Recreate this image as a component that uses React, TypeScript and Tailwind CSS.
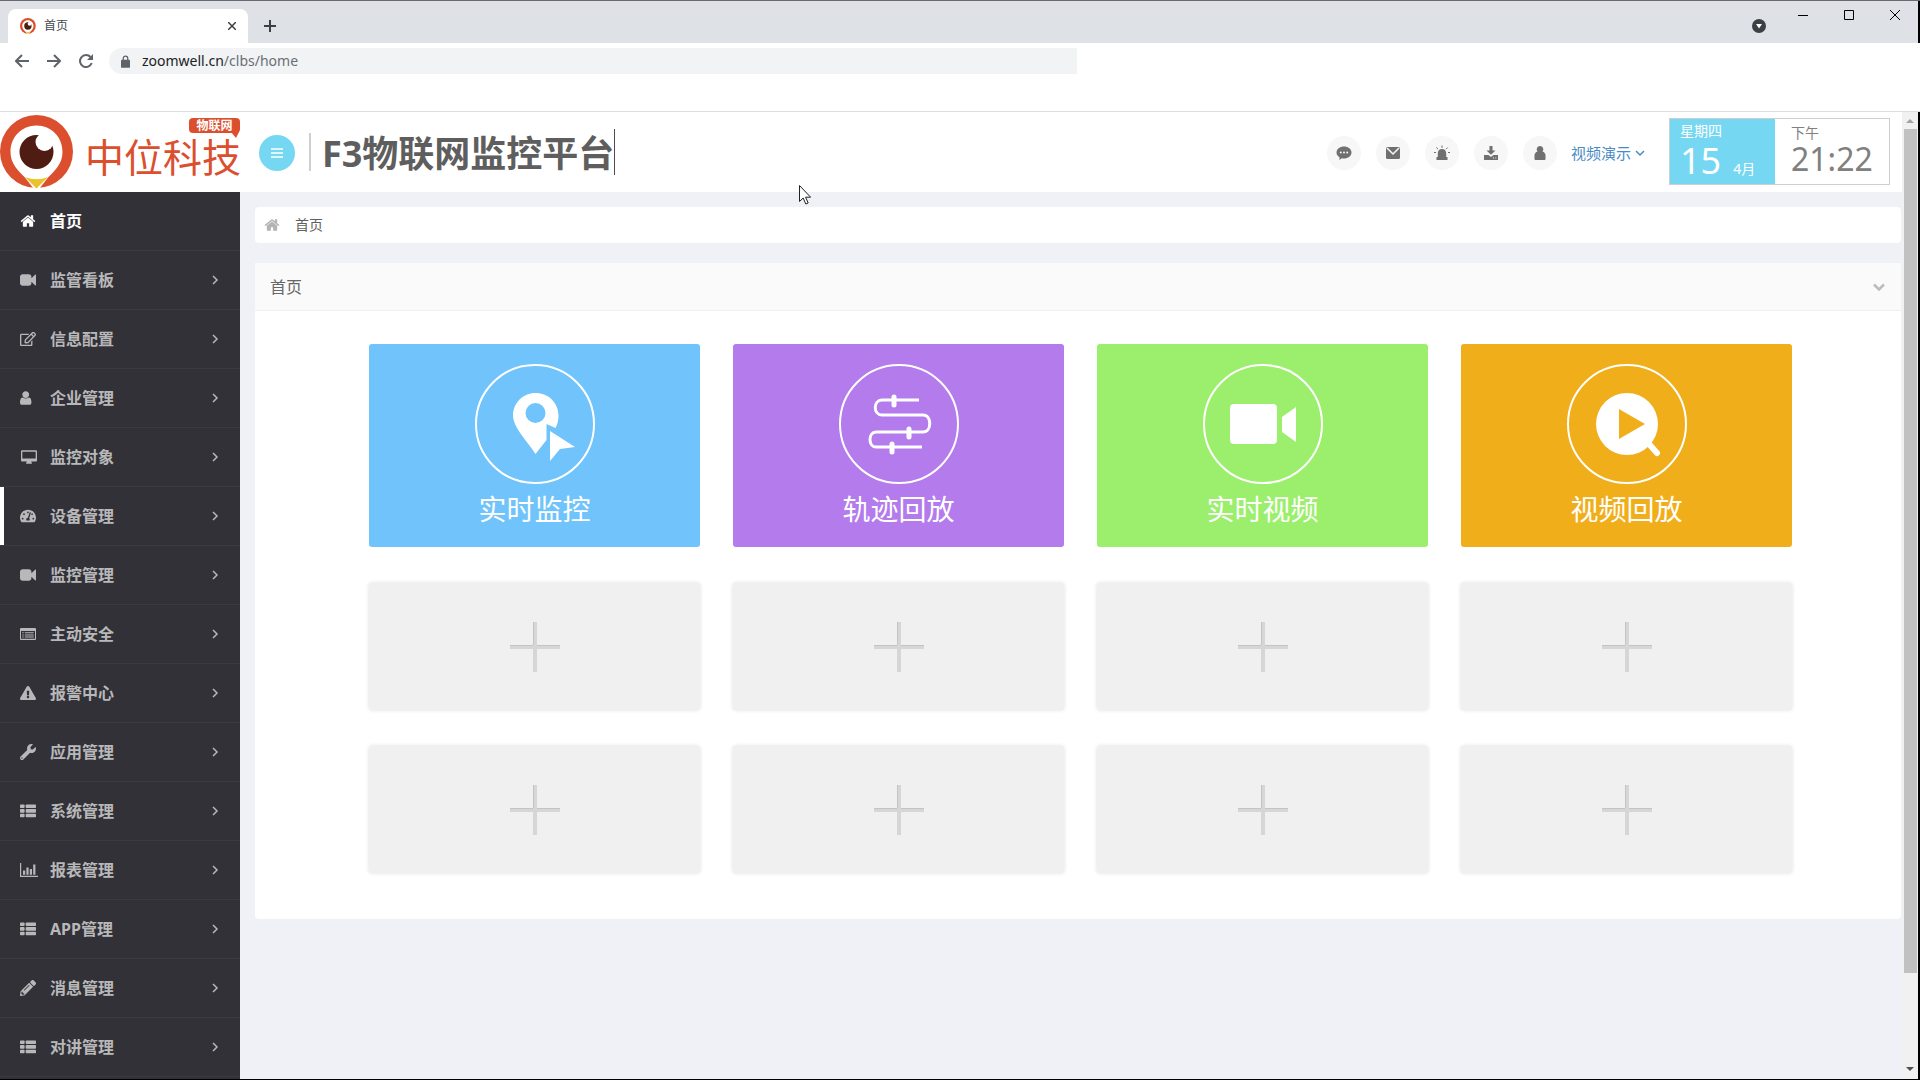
import type { ComponentType, ReactNode } from "react";
import { FaExclamationTriangle, FaPencilAlt, FaRegEdit, FaTachometerAlt, FaWrench } from "react-icons/fa";

type IconProps = { className?: string };

function HomeIcon({ className }: IconProps) {
  return (
    <svg viewBox="0 0 1792 1792" fill="currentColor" className={className} aria-hidden="true">
      <path d="M1472 992v480q0 26-19 45t-45 19h-384v-384h-256v384h-384q-26 0-45-19t-19-45v-480q0-1 .5-3t.5-3l575-474 575 474q1 2 1 6zm223-69l-62 74q-8 9-21 11h-3q-13 0-21-7l-692-577-692 577q-12 8-24 7-13-2-21-11l-62-74q-8-10-7-23.5t11-21.5l719-599q32-26 76-26t76 26l244 204v-195q0-14 9-23t23-9h192q14 0 23 9t9 23v408l219 182q10 8 11 21.5t-7 23.5z" />
    </svg>
  );
}

function VideoIcon({ className }: IconProps) {
  return (
    <svg viewBox="0 0 1792 1792" fill="currentColor" className={className} aria-hidden="true">
      <path d="M1792 352v1088q0 42-39 59-13 5-25 5-27 0-45-19l-403-403v166q0 119-84.500 203.500t-203.500 84.500h-704q-119 0-203.500-84.500t-84.500-203.500v-704q0-119 84.500-203.500t203.500-84.500h704q119 0 203.500 84.500t84.500 203.500v165l403-402q18-19 45-19 12 0 25 5 39 17 39 59z" />
    </svg>
  );
}

function UserIcon({ className }: IconProps) {
  return (
    <svg viewBox="256 0 1792 1792" fill="currentColor" className={className} aria-hidden="true">
      <path d="M1536 1399q0 109-62.500 187t-150.500 78h-854q-88 0-150.500-78t-62.500-187q0-85 8.500-160.500t31.500-152 58.500-131 94-89 134.500-34.500q131 128 313 128t313-128q76 0 134.500 34.500t94 89 58.500 131 31.500 152 8.500 160.500zm-256-887q0 159-112.500 271.500t-271.500 112.500-271.500-112.500-112.500-271.500 112.500-271.500 271.500-112.500 271.500 112.500 112.500 271.500z" />
    </svg>
  );
}

function DesktopIcon({ className }: IconProps) {
  return (
    <svg viewBox="0 0 18 18" fill="currentColor" className={`${className} w-[18px]`} aria-hidden="true">
      <path fillRule="evenodd" d="M1.300 1.500h15.400q1.300 0 1.300 1.300v10q0 1.300-1.300 1.300h-5.200q0 1 .8 1.700v.9H5.700v-.9q.8-.7.8-1.700H1.300Q0 14.100 0 12.800v-10q0-1.300 1.300-1.300zM1.500 3v7.800h15V3z" />
    </svg>
  );
}

function ListAltIcon({ className }: IconProps) {
  return (
    <svg viewBox="0 0 16 16" fill="currentColor" className={className} aria-hidden="true">
      <path fillRule="evenodd" d="M1 2h14q1 0 1 1v10q0 1-1 1H1q-1 0-1-1V3q0-1 1-1zm0 3v7.800h14V5z" />
      <path d="M2.300 6.200h1.400v1H2.300zM4.800 6.200h8.900v1H4.800zM2.300 8.400h1.400v1H2.300zM4.800 8.400h8.900v1H4.800zM2.300 10.600h1.400v1H2.300zM4.800 10.600h8.900v1H4.800z" />
    </svg>
  );
}

function ThListIcon({ className }: IconProps) {
  return (
    <svg viewBox="0 0 16 16" fill="currentColor" className={className} aria-hidden="true">
      <rect x="0" y="1.500" width="4.600" height="3.600" rx="0.800" />
      <rect x="5.700" y="1.500" width="10.300" height="3.600" rx="0.800" />
      <rect x="0" y="6.100" width="4.600" height="3.600" rx="0.800" />
      <rect x="5.700" y="6.100" width="10.300" height="3.600" rx="0.800" />
      <rect x="0" y="10.700" width="4.600" height="3.600" rx="0.800" />
      <rect x="5.700" y="10.700" width="10.300" height="3.600" rx="0.800" />
    </svg>
  );
}

function ChartIcon({ className }: IconProps) {
  return (
    <svg viewBox="0 0 18 16" fill="currentColor" className={`${className} w-[18px]`} aria-hidden="true">
      <path d="M0 1h1.200v12.800H18V15H0zM3 8.500h2.200v4.300H3zM6.400 5.500h2.200v7.300H6.400zM9.800 7h2.200v5.800H9.800zM13.200 2.500h2.200v10.300h-2.200z" />
    </svg>
  );
}

function Chevron({ className }: IconProps) {
  return (
    <svg viewBox="0 0 10 10" fill="none" stroke="currentColor" strokeWidth="1.500" className={className} aria-hidden="true">
      <path d="M3 1l4 4-4 4" />
    </svg>
  );
}

const menu: { label: string; icon: ComponentType<IconProps> }[] = [
  { label: "首页", icon: HomeIcon },
  { label: "监管看板", icon: VideoIcon },
  { label: "信息配置", icon: FaRegEdit },
  { label: "企业管理", icon: UserIcon },
  { label: "监控对象", icon: DesktopIcon },
  { label: "设备管理", icon: FaTachometerAlt },
  { label: "监控管理", icon: VideoIcon },
  { label: "主动安全", icon: ListAltIcon },
  { label: "报警中心", icon: FaExclamationTriangle },
  { label: "应用管理", icon: FaWrench },
  { label: "系统管理", icon: ThListIcon },
  { label: "报表管理", icon: ChartIcon },
  { label: "APP管理", icon: ThListIcon },
  { label: "消息管理", icon: FaPencilAlt },
  { label: "对讲管理", icon: ThListIcon },
];

// Icons are drawn on a 120x120 board, the outer ring included
const tiles: { label: string; color: string; art: ReactNode }[] = [
  {
    label: "实时监控",
    color: "bg-[#70c4fb]",
    art: (
      <>
        <path
          fill="#fff"
          fillRule="evenodd"
          d="M60.500 29c13 0 23 10 23 22.500 0 5-1 9-3 12.500l-9-4v16L60.500 90C54 79 38 64 38 51.500c0-12.500 10-22.500 22.500-22.500zm0 10a10 10 0 1 0 0 20 10 10 0 0 0 0-20z"
        />
        <path fill="#fff" d="M75 67l25 16-15 2-10 12z" />
      </>
    ),
  },
  {
    label: "轨迹回放",
    color: "bg-[#b37bec]",
    art: (
      <g fill="none" stroke="#fff" strokeWidth="3" strokeLinecap="round">
        <path strokeLinecap="butt" d="M80 36H43c-9 0-9 15 0 15h41c9 0 9 17 0 17H37c-8 0-8 15 0 15h46" />
        <path strokeWidth="5" d="M55 33v8M70 65v8M53 80v8" />
      </g>
    ),
  },
  {
    label: "实时视频",
    color: "bg-[#9bef6c]",
    art: (
      <>
        <rect x="27" y="40" width="47" height="40" rx="4" fill="#fff" />
        <path fill="#fff" d="M79 53l14-10v35L79 68z" />
      </>
    ),
  },
  {
    label: "视频回放",
    color: "bg-[#f1ae1b]",
    art: (
      <>
        <circle cx="60" cy="60" r="31" fill="#fff" />
        <path d="M82 80l8 9" stroke="#fff" strokeWidth="6" strokeLinecap="round" />
        <path fill="#f1ae1b" d="M52 45l26 15-26 15z" />
      </>
    ),
  },
];

const tools: { label: string; art: ReactNode }[] = [
  {
    label: "消息",
    art: (
      <>
        <path d="M8 1.500c4.200 0 7.500 2.600 7.500 6s-3.300 6-7.500 6c-.8 0-1.500-.1-2.200-.3L3.500 15v-2.800C1.700 11.100.500 9.400.500 7.500c0-3.400 3.300-6 7.500-6z" />
        <g fill="#f7f7f7">
          <circle cx="4.800" cy="7.500" r="1" />
          <circle cx="8" cy="7.500" r="1" />
          <circle cx="11.200" cy="7.500" r="1" />
        </g>
      </>
    ),
  },
  {
    label: "邮件",
    art: (
      <>
        <rect x="1" y="2" width="14" height="12" rx="1.500" />
        <path d="M2 3l6 6 6-6" fill="none" stroke="#f7f7f7" strokeWidth="1.500" />
      </>
    ),
  },
  {
    label: "报警",
    art: (
      <>
        <path d="M8 4c2.800 0 4.200 2 4.200 4.400V12.500H3.800V8.400C3.800 6 5.200 4 8 4zM2.500 12h11v3h-11z" />
        <path d="M8 .5v2.400M2.300 2.500L4 4.200M13.700 2.500L12 4.200M0 7.500h2M14 7.500h2" fill="none" stroke="currentColor" />
      </>
    ),
  },
  {
    label: "下载",
    art: <path fillRule="evenodd" d="M6.500 1h3v4.500h3L8 9.800 3.500 5.500h3zM1 10h4.500L8 12l2.500-2H15v5H1zm9 2.500v1h1v-1zm2.300 0v1h1v-1z" />,
  },
  {
    label: "用户",
    art: <path d="M8 1a3.300 3.300 0 0 1 2.500 5.500c1.800.6 3 2 3 3.800V14q0 1-1 1h-9q-1 0-1-1v-3.700c0-1.800 1.200-3.200 3-3.800A3.300 3.300 0 0 1 8 1z" />,
  },
];

function EyeLogo({ className }: IconProps) {
  return (
    <svg viewBox="0 0 74 74" className={className} aria-hidden="true">
      <circle cx="36.500" cy="36.500" r="36.500" fill="#dc4f2e" />
      <path fill="#fff" d="M36.500 10.500c15 0 26 11.500 26 26.500 0 12-8 19-14 25L39 74h-5L24.500 62c-6-6-14-13-14-25 0-15 11-26.500 26-26.500z" />
      <path fill="#ecc22b" d="M25 62q11.500 4.500 23 0L36.500 73.500z" />
      <circle cx="36.500" cy="37" r="17" fill="#4e1c12" />
      <circle cx="44.500" cy="27" r="9" fill="#fff" />
    </svg>
  );
}

function BrowserChrome() {
  return (
    <div className="border-t border-[#6b6870]">
      <div className="flex h-[42px] items-end border-r-2 border-black bg-[#dee1e5] pl-2">
        <div className="flex h-[34px] w-60 items-center rounded-t-lg bg-white pr-2 pl-3">
          <EyeLogo className="size-4" />
          <span className="ml-2 text-xs text-[#45494d]">首页</span>
          <button aria-label="关闭标签页" className="ml-auto p-1 text-[#3c4043]">
            <svg viewBox="0 0 8 8" className="size-2" stroke="currentColor" strokeWidth="1.500">
              <path d="M0 0l8 8M8 0L0 8" />
            </svg>
          </button>
        </div>
        <button aria-label="新建标签页" className="mb-[11px] ml-4 text-[#3c4043]">
          <svg viewBox="0 0 12 12" className="size-3" stroke="currentColor" strokeWidth="2">
            <path d="M6 0v12M0 6h12" />
          </svg>
        </button>
        <div className="mr-[18px] ml-auto flex items-start self-start text-black">
          <svg viewBox="0 0 14 14" className="mt-[18px] mr-8 size-[14px]" aria-hidden="true">
            <circle cx="7" cy="7" r="7" fill="#3c4043" />
            <path d="M4 5h6L7 9.500z" fill="#fff" />
          </svg>
          <div className="mt-[9px] flex gap-9">
            <button aria-label="最小化">
              <svg viewBox="0 0 10 10" className="size-[10px]" stroke="currentColor">
                <path d="M0 5.500h10" />
              </svg>
            </button>
            <button aria-label="最大化">
              <svg viewBox="0 0 10 10" className="size-[10px]" fill="none" stroke="currentColor">
                <path d="M.5.5h9v9h-9z" />
              </svg>
            </button>
            <button aria-label="关闭">
              <svg viewBox="0 0 10 10" className="size-[10px]" stroke="currentColor">
                <path d="M0 0l10 10M10 0L0 10" />
              </svg>
            </button>
          </div>
        </div>
      </div>

      <div className="flex h-[69px] items-start border-b border-[#dcdee0] bg-white pt-[5px]">
        <div className="flex h-[26px] items-center gap-[18px] pl-[15px] text-[#5f6368]">
          <button aria-label="后退">
            <svg viewBox="0 0 14 14" className="size-[14px]" fill="none" stroke="currentColor" strokeWidth="2">
              <path d="M14 7H1M7 1L1 7l6 6" />
            </svg>
          </button>
          <button aria-label="前进">
            <svg viewBox="0 0 14 14" className="size-[14px]" fill="none" stroke="currentColor" strokeWidth="2">
              <path d="M0 7h13M7 1l6 6-6 6" />
            </svg>
          </button>
          <button aria-label="刷新">
            <svg viewBox="0 0 14 14" className="size-[14px]" fill="none" stroke="currentColor" strokeWidth="2">
              <path d="M12.700 9A6 6 0 1 1 11.500 3" />
              <path d="M14 0v6H8z" fill="currentColor" stroke="none" />
            </svg>
          </button>
        </div>
        <a href="#" className="ml-4 flex h-[26px] w-[968px] items-center rounded-l-full bg-[#f1f3f4] pl-3 text-sm text-[#202124]">
          <svg viewBox="0 0 10 14" className="mr-3 h-[13px] w-[9px]" aria-hidden="true">
            <rect y="5" width="10" height="9" rx="1" fill="#5f6368" />
            <path d="M2.500 5.500V3.500a2.500 2.500 0 0 1 5 0v2" fill="none" stroke="#5f6368" strokeWidth="1.400" />
          </svg>
          zoomwell.cn<span className="text-[#6b6f74]">/clbs/home</span>
        </a>
      </div>
    </div>
  );
}

function AppHeader() {
  return (
    <header className="flex h-20 items-center bg-white pr-3">
      <a href="#" aria-label="中位科技 物联网" className="relative flex h-full w-60 shrink-0 items-center overflow-hidden">
        <EyeLogo className="size-[74px] shrink-0" />
        <span className="mt-2 ml-[11px] text-[39px] leading-none whitespace-nowrap text-[#dc4f2e]">中位科技</span>
        <span className="absolute top-1.5 right-0 flex h-[15px] w-[51px] items-center justify-center rounded-sm bg-[#dc4f2e] text-xs leading-none font-bold text-white">
          物联网
          <svg viewBox="0 0 8 6" className="absolute top-[14px] right-px h-1.5 w-2" aria-hidden="true">
            <path d="M0 0h8L5 6z" fill="#dc4f2e" />
          </svg>
        </span>
      </a>
      <button aria-label="收起菜单" className="mt-0.5 ml-[19px] flex size-9 shrink-0 items-center justify-center rounded-full bg-[#76d7f3] text-white">
        <svg viewBox="0 0 12 12" className="size-3" stroke="currentColor" strokeWidth="1.600">
          <path d="M0 2h12M0 6h12M0 10h12" />
        </svg>
      </button>
      <span className="ml-[14px] h-[38px] w-0.5 bg-[#cfcfcf]" />
      <h1 className="ml-[11px] flex h-[46px] items-center border-r border-[#4c4c55] pt-1 text-4xl leading-none font-bold whitespace-nowrap text-[#5e5e5e]">
        F3物联网监控平台
      </h1>

      <div className="mt-0.5 ml-auto flex items-center gap-[15px]">
        {tools.map((tool) => (
          <button
            key={tool.label}
            aria-label={tool.label}
            className="flex size-[34px] items-center justify-center rounded-full bg-[#f7f7f7] text-[#707070]"
          >
            <svg viewBox="0 0 16 16" fill="currentColor" className="size-4">
              {tool.art}
            </svg>
          </button>
        ))}
      </div>
      <button className="mt-0.5 ml-[14px] flex items-center gap-1 text-[15px] text-[#4a8bc5]">
        视频演示
        <Chevron className="size-[10px] rotate-90" />
      </button>
      <div className="mb-0.5 ml-6 flex h-[67px] border border-[#ccd0d0]">
        <div className="w-[105px] bg-[#76d7f3] pt-0.5 pl-[10px] text-white">
          <p className="text-sm leading-5">星期四</p>
          <p className="flex items-baseline gap-3 text-4xl leading-10">
            15<span className="text-sm">4月</span>
          </p>
        </div>
        <div className="w-[114px] pt-1 pl-4 text-[#808080]">
          <p className="text-sm leading-5">下午</p>
          <p className="text-[32px] leading-8">21:22</p>
        </div>
      </div>
    </header>
  );
}

function Sidebar() {
  return (
    <nav className="w-60 shrink-0 bg-[#323137] text-base font-bold text-[#b8b8ba]">
      <ul>
        {menu.map(({ label, icon: Icon }, i) => (
          <li key={label} className="border-b border-[#3b3a41]">
            <a
              href="#"
              className={`flex h-[58px] items-center border-l-4 pr-5 pl-4 ${i === 0 ? "text-white" : ""} ${
                label === "设备管理" ? "border-white" : "border-transparent"
              }`}
            >
              <span className="flex w-[30px] items-center">
                <Icon className="size-4" />
              </span>
              {label}
              {i > 0 && <Chevron className="ml-auto size-[10px]" />}
            </a>
          </li>
        ))}
      </ul>
    </nav>
  );
}

function Dashboard() {
  return (
    <main className="min-w-0 flex-1 bg-[#eff1f6] pt-[15px] pr-px pl-[15px]">
      <div className="flex h-9 items-center rounded-sm bg-white pl-[9px] text-sm text-[#5f5f5f]">
        <HomeIcon className="mr-[15px] size-4 text-[#b3b3b3]" />
        首页
      </div>

      <section className="mt-5 rounded-sm bg-white">
        <div className="flex h-12 items-center justify-between border-b border-[#f0f0f0] bg-[#fafafa] pr-4 pl-[15px]">
          <h2 className="text-base text-[#666666]">首页</h2>
          <button aria-label="折叠">
            <svg viewBox="0 0 12 8" className="h-2 w-3" fill="none" stroke="#bcbcbc" strokeWidth="2.500">
              <path d="M1 1.500l5 5 5-5" />
            </svg>
          </button>
        </div>
        <div className="grid grid-cols-4 gap-x-[33px] gap-y-9 pt-[33px] pr-[109px] pb-[46px] pl-[114px]">
          {tiles.map((tile) => (
            <button key={tile.label} className={`flex h-[203px] flex-col items-center rounded-[3px] pt-5 text-white ${tile.color}`}>
              <svg viewBox="0 0 120 120" className="size-[120px]">
                <circle cx="60" cy="60" r="59" fill="none" stroke="#fff" strokeWidth="2" />
                {tile.art}
              </svg>
              <span className="mt-[5px] text-[28px] leading-10">{tile.label}</span>
            </button>
          ))}
          {Array.from({ length: 8 }, (_, i) => (
            <button
              key={i}
              aria-label="添加"
              className="flex h-[127px] items-center justify-center rounded-[3px] bg-[#f0f0f0] shadow-[0_0_4px_#dedede]"
            >
              <svg viewBox="0 0 50 50" className="size-[50px]">
                <path d="M23 0h4v50h-4zM0 23h50v4H0z" fill="#d6d6d6" />
                <path d="M23.500 0v23M0 23.500h23M27 23.500h23" fill="none" stroke="#c4c4c4" />
              </svg>
            </button>
          ))}
        </div>
      </section>
    </main>
  );
}

function ScrollTrack() {
  return (
    <div className="flex w-[18px] shrink-0 flex-col items-center border-r-2 border-black bg-[#f1f1f1]">
      <svg viewBox="0 0 8 4" className="mt-[7px] mb-1.5 h-1 w-2" aria-hidden="true">
        <path d="M4 0l4 4H0z" fill="#a3a3a3" />
      </svg>
      <div className="w-[13px] grow-[9] basis-0 bg-[#c1c1c1]" />
      <div className="grow basis-0" />
      <svg viewBox="0 0 8 4" className="mb-2 h-1 w-2" aria-hidden="true">
        <path d="M0 0h8L4 4z" fill="#505050" />
      </svg>
    </div>
  );
}

export default function App() {
  return (
    <div className="relative flex min-h-screen flex-col border-b border-black bg-white font-['Noto_Sans','Noto_Sans_CJK_SC',sans-serif]">
      <BrowserChrome />
      <div className="flex flex-1">
        <div className="flex min-w-0 flex-1 flex-col">
          <AppHeader />
          <div className="flex flex-1">
            <Sidebar />
            <Dashboard />
          </div>
        </div>
        <ScrollTrack />
      </div>

      {/* Mouse pointer, over everything else */}
      <svg viewBox="0 0 12 20" className="pointer-events-none absolute top-[185px] left-[799px] h-5 w-3" aria-hidden="true">
        <path d="M.5.5v16l3.700-3.500 2.600 6 2.400-1-2.600-5.800h5z" fill="#fff" stroke="#222" />
      </svg>
    </div>
  );
}
